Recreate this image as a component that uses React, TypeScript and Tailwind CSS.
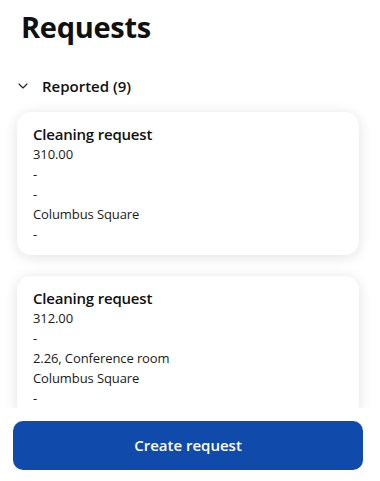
import { ChevronDown } from "lucide-react";

type Request = {
  title: string;
  lines: string[];
};

const requests: Request[] = [
  { title: "Cleaning request", lines: ["310.00", "-", "-", "Columbus Square", "-"] },
  { title: "Cleaning request", lines: ["312.00", "-", "2.26, Conference room", "Columbus Square", "-"] },
];

const RequestCard = ({ request }: { request: Request }) => (
  <div className="rounded-[14px] bg-white px-4 pt-3 pb-[11px] shadow-[0_2px_14px_rgba(0,0,0,0.12)]">
    <h3 className="text-[15px] leading-5 font-semibold tracking-[-0.2px] text-[#111]">{request.title}</h3>
    {request.lines.map((line, i) => (
      <p key={i} className="text-[13px] leading-5 tracking-[-0.1px] text-[#1a1a1a]">
        {line}
      </p>
    ))}
  </div>
);

export default function App() {
  return (
    <div
      className="flex h-[481px] w-[380px] flex-col overflow-hidden bg-white"
      style={{ fontFamily: '"Open Sans", "Noto Sans", sans-serif' }}
    >
      <div className="min-h-0 flex-1 overflow-hidden">
        <h1 className="px-[21px] pt-[7px] text-[29px] leading-[40px] font-bold tracking-[-0.3px] text-[#111]">
          Requests
        </h1>
        <div className="mt-[29px] flex items-center gap-[11px] pl-[15px]">
          <ChevronDown size={16} strokeWidth={1.6} className="text-[#222]" />
          <span className="text-[15px] leading-5 font-semibold text-[#111]">Reported (9)</span>
        </div>
        <div className="mt-[16px] flex flex-col gap-[21px] pl-[17px] pr-[21px] pb-4">
          {requests.map((r, i) => (
            <RequestCard key={i} request={r} />
          ))}
        </div>
      </div>
      <div className="h-[73px] shrink-0 bg-white pl-[13px] pr-[17px] pt-[13px]">
        <button className="flex h-[49px] w-full items-center justify-center rounded-[10px] bg-[#104aab] text-[15px] font-semibold text-white">
          Create request
        </button>
      </div>
    </div>
  );
}
